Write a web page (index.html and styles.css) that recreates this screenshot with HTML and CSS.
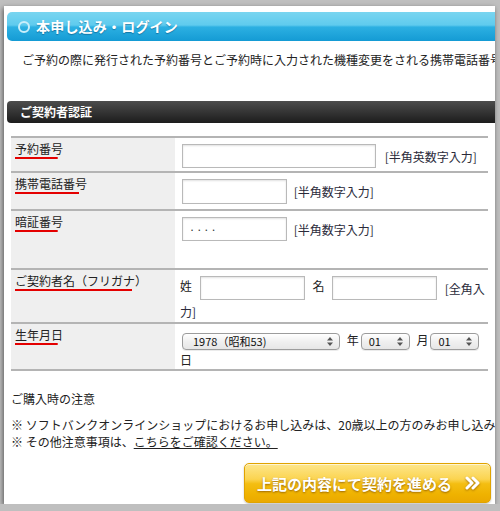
FILE: index.html
```html
<!DOCTYPE html>
<html lang="ja">
<head>
<meta charset="utf-8">
<title>本申し込み・ログイン</title>
<link rel="stylesheet" href="styles.css">
</head>
<body>
<div class="panel">
  <div class="content">
    <h1 class="title-bar"><span class="ring"></span>本申し込み・ログイン</h1>
    <p class="lead">ご予約の際に発行された予約番号とご予約時に入力された機種変更をされる携帯電話番号を入力してください。</p>
    <h2 class="section-bar">ご契約者認証</h2>
    <table class="form">
      <tr class="r1">
        <th><span class="lbl">予約番号</span></th>
        <td><input class="inp wide" type="text"> <span class="hint">[半角英数字入力]</span></td>
      </tr>
      <tr class="r2">
        <th><span class="lbl">携帯電話番号</span></th>
        <td><input class="inp short" type="text"> <span class="hint">[半角数字入力]</span></td>
      </tr>
      <tr class="r3">
        <th><span class="lbl">暗証番号</span></th>
        <td><input class="inp short pw" type="text" value="····"> <span class="hint">[半角数字入力]</span></td>
      </tr>
      <tr class="r4">
        <th><span class="lbl">ご契約者名（フリガナ）</span></th>
        <td>姓 <input class="inp name first" type="text"> 名 <input class="inp name second" type="text"> <span class="hint">[全角入力]</span></td>
      </tr>
      <tr class="r5">
        <th><span class="lbl">生年月日</span></th>
        <td><span class="sel year">1978（昭和53)<svg class="arr" width="6" height="9" viewBox="0 0 6 9"><path d="M0 3.5 L3 0 L6 3.5Z M0 5.5 L3 9 L6 5.5Z" fill="#555"/></svg></span> 年<span class="sel small">01<svg class="arr" width="6" height="9" viewBox="0 0 6 9"><path d="M0 3.5 L3 0 L6 3.5Z M0 5.5 L3 9 L6 5.5Z" fill="#555"/></svg></span> 月<span class="sel small">01<svg class="arr" width="6" height="9" viewBox="0 0 6 9"><path d="M0 3.5 L3 0 L6 3.5Z M0 5.5 L3 9 L6 5.5Z" fill="#555"/></svg></span> 日</td>
      </tr>
    </table>
    <div class="notes">
      <p class="notes-title">ご購入時の注意</p>
      <p class="note">※ ソフトバンクオンラインショップにおけるお申し込みは、20歳以上の方のみお申し込みいただけます。<br>※ その他注意事項は、<a href="#">こちらをご確認ください。</a></p>
    </div>
    <div class="actions">
      <a class="go" href="#">上記の内容にて契約を進める<svg class="chev" width="16" height="14" viewBox="0 0 16 14"><path d="M2 2 L7 7 L2 12 M8 2 L13 7 L8 12" fill="none" stroke="#fff" stroke-width="3" stroke-linecap="round" stroke-linejoin="round"/></svg></a>
    </div>
  </div>
</div>
</body>
</html>
```

FILE: styles.css
```css
html, body {
  margin: 0;
  padding: 0;
}
body {
  background: #bfbfbf;
  font-family: "Noto Sans CJK JP", "Liberation Sans", sans-serif;
  color: #222;
  font-size: 12px;
}
.panel {
  margin: 6px 0 0 4px;
  width: 491px;
  height: 498px;
  background: #fff;
  overflow: hidden;
  box-shadow: -1px 2px 5px rgba(0,0,0,0.55);
}
.content {
  padding: 6px 0 0 3px;
  width: 540px;
}
.title-bar {
  margin: 0;
  height: 29px;
  border-radius: 5px 0 0 5px;
  background: linear-gradient(#79d5f0 0%, #5fcbee 45%, #2cb0e2 52%, #149bd4 100%);
  color: #fff;
  font-size: 14px;
  font-weight: bold;
  line-height: 29px;
  display: flex;
  align-items: center;
  text-shadow: 0 1px 1px rgba(0,60,100,0.45);
  letter-spacing: 0.2px;
}
.ring {
  width: 8px;
  height: 8px;
  border: 2.5px solid #c9eefa;
  border-radius: 50%;
  margin: 0 6px 0 11px;
  box-sizing: content-box;
}
.lead {
  margin: 10px 0 0 15px;
  line-height: 18px;
  white-space: nowrap;
  color: #222;
}
.section-bar {
  margin: 32px 0 0;
  height: 22px;
  border-radius: 4px 0 0 4px;
  background: linear-gradient(#4d4d4d, #1c1c1c);
  color: #fff;
  font-size: 12px;
  font-weight: bold;
  line-height: 22px;
  padding-left: 13px;
}
.form {
  margin: 13px 0 0 4px;
  border-collapse: collapse;
  width: 477px;
}
.form tr {
  border-top: 2px solid #b4b4b4;
}
.form tr.r5 {
  border-bottom: 2px solid #b4b4b4;
}
.form th {
  width: 156px;
  background: #efefef;
  text-align: left;
  vertical-align: top;
  font-weight: normal;
  padding: 4px 4px 0;
  line-height: 14px;
  color: #222;
}
.form td {
  vertical-align: top;
  padding: 6px 0 0 5px;
  line-height: 19px;
}
.r1 { height: 35px; }
.r2 { height: 38px; }
.r3 { height: 59px; }
.r4 { height: 54px; }
.r5 { height: 46px; }
.lbl {
  display: inline-block;
  padding-bottom: 3px;
  background: linear-gradient(#e40000, #e40000) left bottom / 89% 2px no-repeat;
}
.inp {
  box-sizing: border-box;
  height: 24px;
  margin: 0 2px;
  border: 1px solid #b9b9b9;
  box-shadow: inset 0 1px 2px rgba(0,0,0,0.12);
  vertical-align: middle;
  font-size: 12px;
  font-family: "Noto Sans CJK JP", sans-serif;
  padding: 0 6px;
  background: #fff;
  color: #333;
}
.inp.pw {
  letter-spacing: 1px;
  padding-left: 6px;
  font-size: 11px;
}
.inp.wide { width: 194px; margin-right: 6px; }
.inp.short { width: 105px; margin-right: 4px; }
.inp.name { width: 105px; }
.inp.first { margin-left: 5px; margin-right: 5px; }
.inp.second { margin-left: 5px; margin-right: 5px; }
.r2 .inp { height: 25px; }
.hint {
  vertical-align: middle;
  color: #2a2a3a;
}
.sel {
  display: inline-flex;
  align-items: center;
  justify-content: space-between;
  box-sizing: border-box;
  height: 17px;
  margin: 0 2px;
  border: 1px solid #9c9c9c;
  border-radius: 4px;
  background: linear-gradient(#ffffff, #f0f0f0 50%, #e6e6e6);
  box-shadow: 0 1px 0 rgba(0,0,0,0.08);
  font-size: 11px;
  line-height: 15px;
  padding: 0 6px 0 10px;
  vertical-align: middle;
  color: #111;
}
.sel.year { width: 158px; margin-right: 4px; }
.sel.small { width: 49px; padding-left: 7px; margin-right: 4px; }
.arr { flex: none; }
.notes {
  margin: 19px 0 0 4px;
}
.notes-title {
  margin: 0;
  line-height: 18px;
}
.note {
  margin: 8px 0 0;
  line-height: 17px;
  white-space: nowrap;
}
.note a {
  color: #222;
  text-decoration: underline;
}
.actions {
  width: 484px;
  display: flex;
  justify-content: flex-end;
  margin-top: 13px;
}
.go {
  box-sizing: border-box;
  width: 247px;
  height: 40px;
  border: 1px solid #e0a300;
  border-radius: 5px;
  background: linear-gradient(#fde68c 0%, #fbd450 40%, #f4be12 52%, #efb200 80%, #eaa900 100%);
  box-shadow: inset 0 1px 0 rgba(255,255,255,0.6), 0 1px 2px rgba(0,0,0,0.25);
  color: #fff;
  font-size: 15px;
  font-weight: bold;
  text-decoration: none;
  display: flex;
  align-items: center;
  padding-left: 12px;
  white-space: nowrap;
  text-shadow: 0 1px 2px rgba(120,70,0,0.7);
}
.chev {
  margin-left: 13px;
  flex: none;
  filter: drop-shadow(0 1px 1px rgba(120,70,0,0.6));
}
```
